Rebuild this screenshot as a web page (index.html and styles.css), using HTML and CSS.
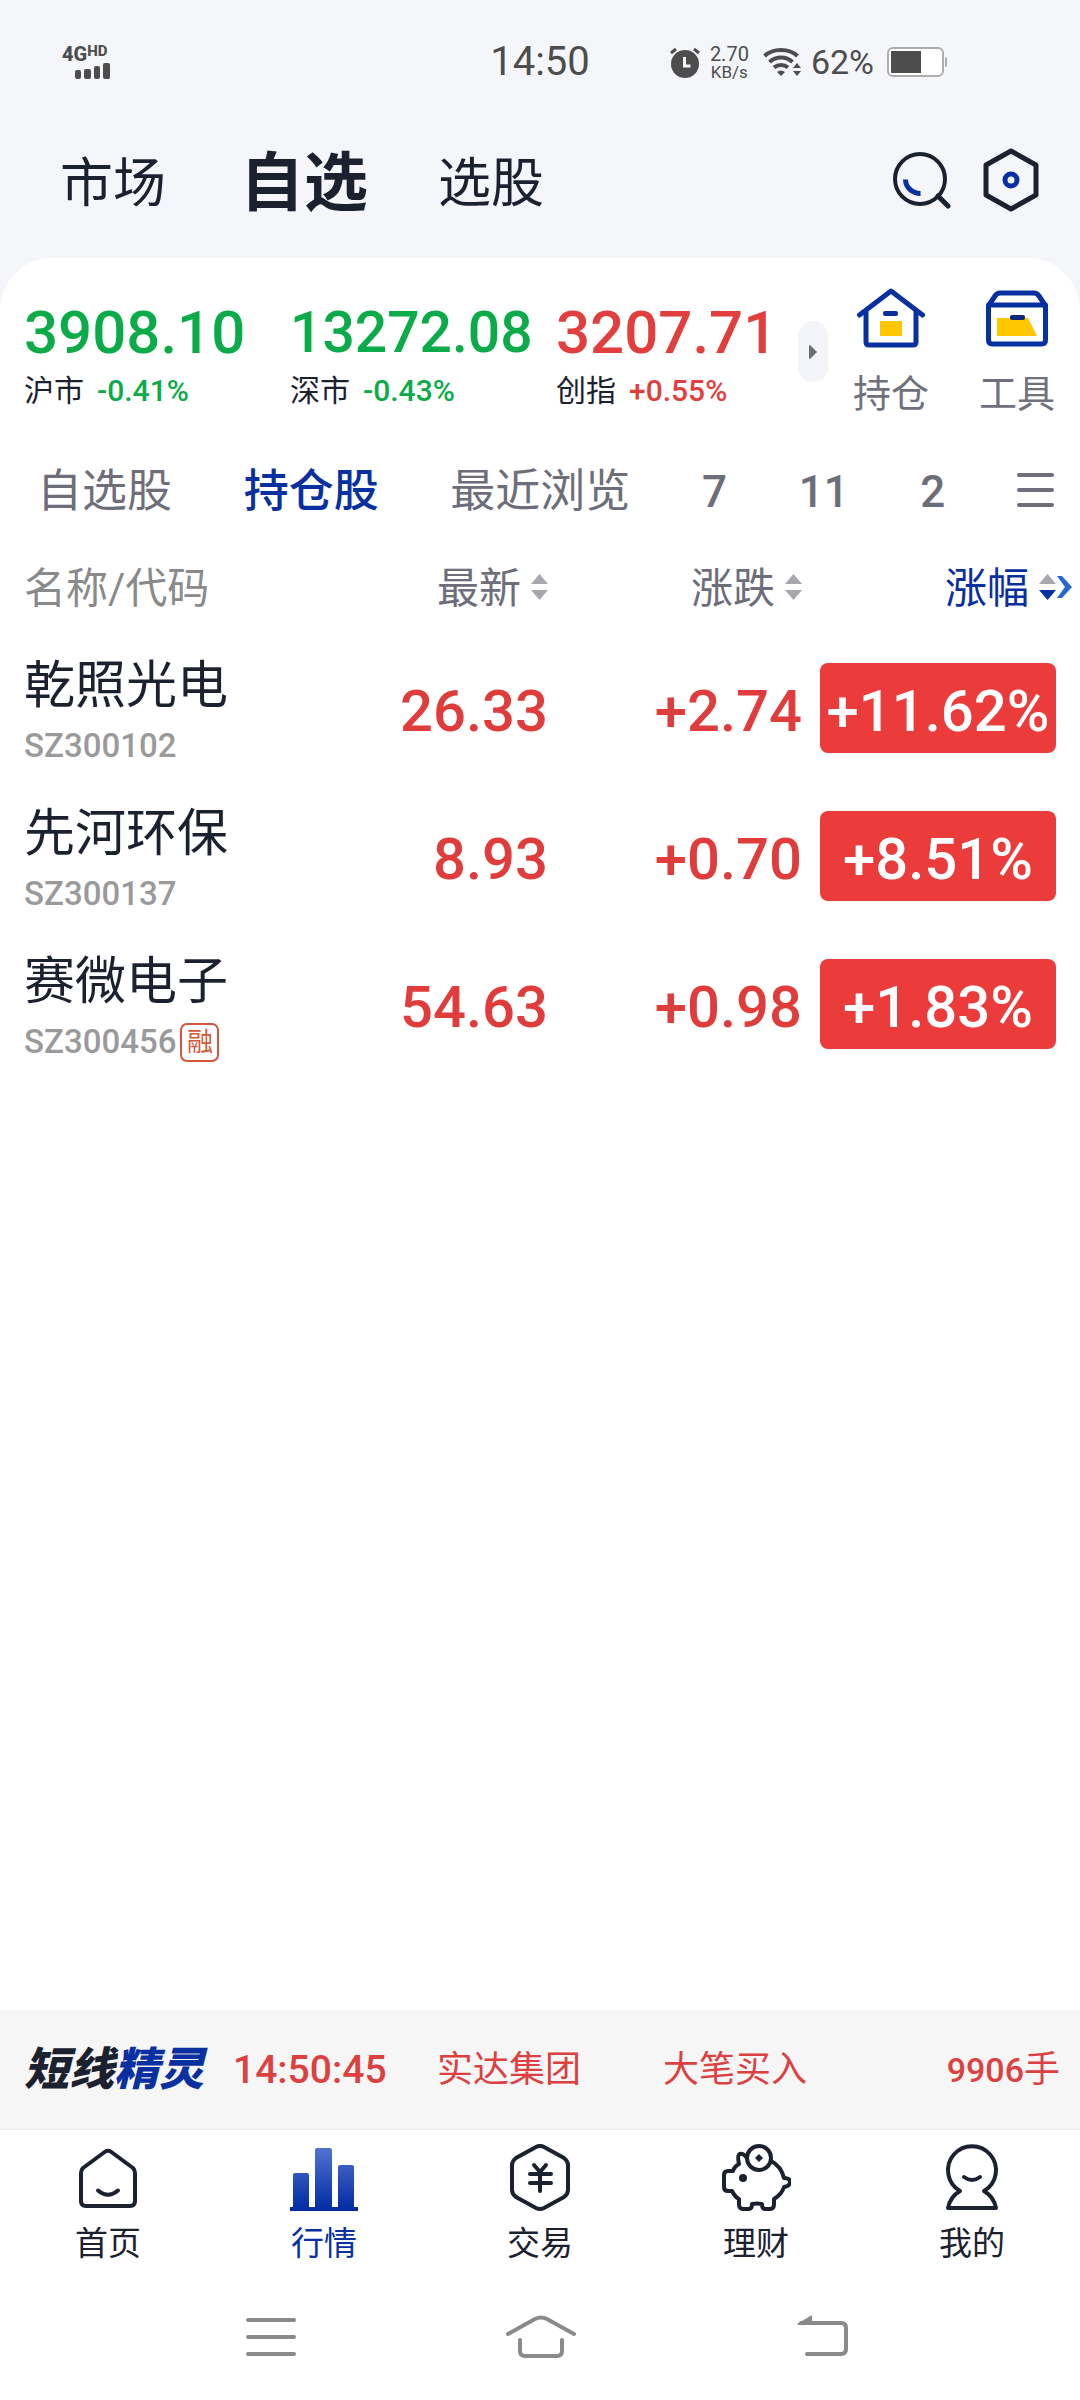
FILE: index.html
```html
<!DOCTYPE html>
<html lang="zh-CN">
<head>
<meta charset="utf-8">
<meta name="viewport" content="width=device-width, initial-scale=1">
<title>自选</title>
<link rel="stylesheet" href="styles.css">
</head>
<body>
<div class="app">
  <div class="status">
    <div class="status-left">
      <span class="net">4G<span class="hd">HD</span></span>
      <svg class="signal" width="35" height="16" viewBox="0 0 35 16"><g fill="#4d4d4d"><rect x="0" y="7" width="6" height="9" rx="2"/><rect x="9" y="6" width="7" height="10" rx="2"/><rect x="19" y="3" width="6" height="13" rx="2"/><rect x="28" y="0" width="7" height="16" rx="2"/></g></svg>
    </div>
    <div class="status-time">14:50</div>
    <div class="status-right">
      <svg width="30" height="31" viewBox="0 0 30 31"><circle cx="15" cy="17" r="14" fill="#4d4d4d"/><path d="M1 6l5-4M29 6l-5-4" stroke="#4d4d4d" stroke-width="3" fill="none"/><path d="M14.500 10v9h6" stroke="#f4f6fa" stroke-width="3" fill="none"/></svg>
      <span class="speed"><span>2.70</span><span class="unit">KB/s</span></span>
      <svg class="wifi" width="38" height="30" viewBox="0 0 38 30"><g fill="none" stroke="#4d4d4d" stroke-width="4"><path d="M1.500 9C10 1 26 1 34.500 9"/><path d="M6.500 15C13 9 23 9 29.500 15"/><path d="M11 20.500C15 17 21 17 25 20.500"/></g><path d="M14 25q4-3 8 0l-4 4z" fill="#4d4d4d"/><path d="M30 21l4-5 4 5zM30 24l4 5 4-5z" fill="#4d4d4d"/></svg>
      <span class="pct">62%</span>
      <svg width="60" height="31" viewBox="0 0 60 31"><rect x="1" y="1" width="55" height="28" rx="5" fill="#fff" stroke="#adadad" stroke-width="2"/><rect x="4" y="4" width="30" height="22" fill="#4d4d4d"/><path d="M58 10q2 0 2 2v6q0 2-2 2z" fill="#adadad"/></svg>
    </div>
  </div>

  <header class="top">
    <nav class="top-tabs">
      <a href="#">市场</a>
      <a href="#" class="on">自选</a>
      <a href="#">选股</a>
    </nav>
    <div class="top-actions">
      <button class="icon-btn" aria-label="搜索"><svg width="58" height="64" viewBox="0 0 58 64"><circle cx="27" cy="31" r="25" fill="none" stroke="#1c2130" stroke-width="4"/><path d="M45 48l10 10" stroke="#1c2130" stroke-width="5" stroke-linecap="round"/><path d="M12.500 31.500a15 14 0 0 0 15 14" fill="none" stroke="#0930a0" stroke-width="5"/></svg></button>
      <button class="icon-btn" aria-label="设置"><svg width="56" height="64" viewBox="0 0 56 64"><path d="M28 3L53 17V47L28 61L3 47V17Z" fill="none" stroke="#1c2130" stroke-width="5" stroke-linejoin="round"/><circle cx="28" cy="32" r="6" fill="none" stroke="#0930a0" stroke-width="5"/></svg></button>
    </div>
  </header>

  <main class="card">
    <section class="indices">
      <div class="index down"><div class="value">3908.10</div><div class="sub"><span class="mkt">沪市</span><span>-0.41%</span></div></div>
      <div class="index down"><div class="value v-sm">13272.08</div><div class="sub"><span class="mkt">深市</span><span>-0.43%</span></div></div>
      <div class="index up"><div class="value">3207.71</div><div class="sub"><span class="mkt">创指</span><span>+0.55%</span></div></div>
      <button class="more" aria-label="展开"><svg width="8" height="14" viewBox="0 0 8 14"><path d="M0 1Q0 0 1 0L8 7L1 14Q0 14 0 13Z" fill="#6d6e7a"/></svg></button>
      <a href="#" class="tool">
        <svg width="68" height="60" viewBox="0 0 68 60"><g fill="none" stroke="#0930a0" stroke-linecap="round" stroke-linejoin="round"><path d="M2.500 27L34 3L65.500 27" stroke-width="5"/><path d="M9 24V54q0 3 3 3H56q3 0 3-3V24" stroke-width="5"/></g><rect x="23" y="33" width="22" height="15" fill="#ffc700"/><rect x="26" y="23" width="15" height="5" rx="2" fill="#0930a0"/></svg>
        <span>持仓</span>
      </a>
      <a href="#" class="tool">
        <svg width="64" height="60" viewBox="0 0 64 60"><path d="M12 30H43L52 48H12Z" fill="#ffc700"/><g fill="none" stroke="#0930a0" stroke-width="5" stroke-linejoin="round"><path d="M4 17L10 8Q12 5 15 5H49Q52 5 54 8L60 17"/><path d="M3.500 17H60.500V52Q60.500 56 56.500 56H7.500Q3.500 56 3.500 52Z"/></g><rect x="25" y="27" width="15" height="5" rx="2" fill="#0b2a7c"/></svg>
        <span>工具</span>
      </a>
    </section>

    <nav class="groups">
      <a href="#">自选股</a>
      <a href="#" class="on">持仓股</a>
      <a href="#">最近浏览</a>
      <a href="#" class="num">7</a>
      <a href="#" class="num">11</a>
      <a href="#" class="num">2</a>
      <button class="icon-btn" aria-label="分组"><svg width="37" height="41" viewBox="0 0 37 41"><path d="M2 3H35M2 18H35M2 33H35" stroke="#6d6e7a" stroke-width="4" stroke-linecap="round"/></svg></button>
    </nav>

    <table class="stocks">
      <colgroup><col><col class="c-price"><col class="c-chg"><col class="c-pct"></colgroup>
      <thead>
        <tr>
          <th class="name">名称/代码</th>
          <th><button class="sort">最新<svg width="17" height="30" viewBox="0 0 17 30"><path d="M0 10L8.500 0L17 10ZM0 16L8.500 26L17 16Z" fill="#a7a8ad"/></svg></button></th>
          <th><button class="sort">涨跌<svg width="17" height="30" viewBox="0 0 17 30"><path d="M0 10L8.500 0L17 10ZM0 16L8.500 26L17 16Z" fill="#a7a8ad"/></svg></button></th>
          <th><button class="sort on">涨幅<svg width="33" height="30" viewBox="0 0 33 30"><path d="M0 10L8.500 0L17 10Z" fill="#a7a8ad"/><path d="M0 16L8.500 26L17 16Z" fill="#0930a0"/><path d="M18 2H23L33 13L23 24H18L26 13Z" fill="#2468d0"/></svg></button></th>
        </tr>
      </thead>
      <tbody>
        <tr><td class="name"><div class="title">乾照光电</div><div class="code">SZ300102</div></td><td>26.33</td><td>+2.74</td><td class="pct-cell"><span class="pill">+11.62%</span></td></tr>
        <tr><td class="name"><div class="title">先河环保</div><div class="code">SZ300137</div></td><td>8.93</td><td>+0.70</td><td class="pct-cell"><span class="pill">+8.51%</span></td></tr>
        <tr><td class="name"><div class="title">赛微电子</div><div class="code">SZ300456<span class="tag">融</span></div></td><td>54.63</td><td>+0.98</td><td class="pct-cell"><span class="pill">+1.83%</span></td></tr>
      </tbody>
    </table>
  </main>

  <section class="ticker">
    <strong class="brand">短线<span>精灵</span></strong>
    <span class="t-time">14:50:45</span>
    <span class="t-name">实达集团</span>
    <span class="t-act">大笔买入</span>
    <span class="t-vol"><b>9906</b>手</span>
  </section>

  <nav class="tabbar">
    <a href="#"><svg width="70" height="70" viewBox="0 0 70 70"><path d="M31 8.500Q35 5 39 8.500L60 24Q62 26 62 29V57Q62 62 57 62H13Q8 62 8 57V29Q8 26 10 24Z" fill="none" stroke="#1c2130" stroke-width="4" stroke-linejoin="round"/><path d="M25 46.500Q35 55 45 46.500" fill="none" stroke="#1c2130" stroke-width="4" stroke-linecap="round"/></svg><span>首页</span></a>
    <a href="#" class="on"><svg width="70" height="70" viewBox="0 0 70 70"><defs><linearGradient id="bars" gradientUnits="userSpaceOnUse" x1="0" y1="2" x2="0" y2="66"><stop offset="0" stop-color="#5575d2"/><stop offset="1" stop-color="#002ba3"/></linearGradient></defs><path d="M1 67V63H4V31Q4 29 6 29H18Q20 29 20 31V63H26V6Q26 4 28 4H41Q43 4 43 6V63H49V23Q49 21 51 21H63Q65 21 65 23V63H69V67Z" fill="url(#bars)"/></svg><span>行情</span></a>
    <a href="#"><svg width="70" height="70" viewBox="0 0 70 70"><path d="M31 3Q35 1 39 3L59 14Q63 17 63 21V46Q63 50 59 53L39 64Q35 66 31 64L11 53Q7 50 7 46V21Q7 17 11 14Z" fill="none" stroke="#1c2130" stroke-width="4"/><path d="M29 21L35 28L41 21M25 30H46M25 39H46M35 28V47" fill="none" stroke="#1c2130" stroke-width="4" stroke-linecap="round"/></svg><span>交易</span></a>
    <a href="#"><svg width="70" height="70" viewBox="0 0 70 70"><g fill="none" stroke="#1c2130" stroke-width="4" stroke-linejoin="round"><circle cx="38" cy="14" r="12"/><path d="M26 14Q22 9 19 10Q16 11 18 20Q13 23 12 27H7Q3 27 3 31V43Q3 47 7 47H11Q14 53 18 55V60Q18 65 22 65H28Q31 65 31 60Q36 59 41 60Q41 65 44 65H49Q53 65 53 60V55Q61 50 63 43Q69 42 69 38Q69 34 63 34Q60 22 50 17"/></g><circle cx="22" cy="34" r="4" fill="#1c2130"/><path d="M38 10l4 4l-4 4l-4-4Z" fill="#1c2130"/></svg><span>理财</span></a>
    <a href="#"><svg width="70" height="70" viewBox="0 0 70 70"><path d="M23 47A24 24 0 1 1 47 47Q57 53 59 64H11Q13 53 23 47Z" fill="none" stroke="#1c2130" stroke-width="4" stroke-linejoin="round"/><path d="M27 33Q35 39 43 33" fill="none" stroke="#1c2130" stroke-width="4" stroke-linecap="round"/></svg><span>我的</span></a>
  </nav>

  <div class="sysnav">
    <button class="icon-btn" aria-label="最近任务"><svg width="50" height="46" viewBox="0 0 50 46"><path d="M2 5H48M2 22H48M2 39H48" stroke="#8a8a8a" stroke-width="4" stroke-linecap="round"/></svg></button>
    <button class="icon-btn" aria-label="主屏幕"><svg width="82" height="46" viewBox="0 0 82 46"><g fill="none" stroke="#8a8a8a" stroke-width="4" stroke-linecap="round"><path d="M2 19L29 4Q35 1 41 4L68 19"/><path d="M14 25V36Q14 41 19 41H51Q56 41 56 36V25"/></g></svg></button>
    <button class="icon-btn" aria-label="返回"><svg width="52" height="46" viewBox="0 0 52 46"><path d="M4 8H44Q49 8 49 13V34Q49 39 44 39H10" fill="none" stroke="#8a8a8a" stroke-width="4" stroke-linecap="round"/><path d="M0 9L15 0V10H1Z" fill="#8a8a8a"/></svg></button>
  </div>
</div>
</body>
</html>
```
FILE: styles.css
```css
* { box-sizing: border-box; }
body {
  margin: 0;
  background: #f4f6fa;
  color: #1c2130;
  font-family: Roboto, "Noto Sans CJK SC", sans-serif;
}
a { color: inherit; text-decoration: none; }
button { border: 0; padding: 0; background: none; color: inherit; font: inherit; }
svg { display: block; flex: none; }
.app { display: flex; flex-direction: column; min-height: 100vh; }

/* status bar */
.status {
  display: grid;
  grid-template-columns: 1fr auto 1fr;
  align-items: center;
  height: 124px;
  padding: 0 62px;
  color: #4d4d4d;
}
.status-left { width: 48px; }
.net { display: flex; align-items: flex-start; font-size: 20px; line-height: 17px; font-weight: 800; }
.hd { font-size: 15px; line-height: 11px; }
.signal { margin-left: 13px; }
.status-time { font-size: 40px; line-height: 48px; }
.status-right { display: flex; align-items: center; justify-content: flex-end; gap: 10px; padding-right: 71px; }
.speed { display: flex; flex-direction: column; align-items: center; font-size: 20px; line-height: 20px; }
.unit { font-size: 17px; line-height: 17px; }
.wifi { margin-left: 4px; }
.pct { margin-right: 3px; font-size: 34px; line-height: 40px; }

/* header */
.top { display: flex; align-items: center; height: 134px; padding: 0 41px 14px 60px; }
.top-tabs { display: flex; align-items: center; flex: 1; gap: 70px; font-size: 53px; line-height: 72px; }
.top-tabs .on { font-size: 64px; font-weight: 700; padding-left: 4px; }
.top-actions { display: flex; gap: 32px; padding-bottom: 8px; }
.icon-btn { display: flex; align-items: center; justify-content: center; }

/* card */
.card { flex: 1; background: #fff; border-radius: 52px 52px 0 0; padding-top: 26px; }
.indices { display: flex; padding-left: 24px; }
.index { flex: none; width: 266px; padding-top: 15px; }
.index:nth-child(3) { width: 242px; }
.value { font-size: 60px; line-height: 68px; font-weight: 500; }
.v-sm { font-size: 57px; }
.sub { display: flex; align-items: center; gap: 13px; margin-top: 2px; font-size: 30px; line-height: 44px; font-weight: 500; }
.mkt { font-weight: 400; color: #1c2130; }
.down { color: #0aab48; }
.up { color: #e23e3e; }
.more {
  display: flex; align-items: center; justify-content: center;
  width: 30px; height: 61px; margin-top: 37px;
  border-radius: 15px; background: #f4f5fa;
}
.tool { display: flex; flex-direction: column; align-items: center; gap: 18px; flex: 1; padding-top: 4px; color: #70717c; font-size: 38px; line-height: 56px; }

/* group tabs */
.groups {
  display: flex; align-items: center; justify-content: space-between;
  padding: 38px 26px 0 37px;
  color: #6d6e7a; font-size: 45px; line-height: 64px;
}
.groups .on { color: #0930a0; font-weight: 500; }
.num { font-size: 44px; font-weight: 500; }

/* stock table */
.stocks { width: 100%; margin-top: 20px; border-collapse: collapse; table-layout: fixed; }
.c-price { width: 254px; }
.c-chg { width: 254px; }
.c-pct { width: 278px; }
.stocks th { height: 90px; padding: 0; font-size: 42px; line-height: 60px; font-weight: 400; text-align: right; color: #6d6e7a; }
.stocks th.name { text-align: left; padding-left: 24px; color: #8a8a8a; white-space: nowrap; }
.sort { display: inline-flex; align-items: center; gap: 10px; vertical-align: top; }
.sort.on { color: #0930a0; padding-right: 8px; }
.stocks td { height: 148px; padding: 6px 0 0; text-align: right; font-size: 58px; line-height: 84px; font-weight: 500; color: #e03c3c; }
.stocks td.name { text-align: left; padding: 0 0 0 24px; font-weight: 400; white-space: nowrap; }
.title { padding-top: 6px; color: #1c2130; font-size: 51px; line-height: 70px; }
.code { display: flex; align-items: center; gap: 4px; height: 50px; color: #9a9a9a; font-size: 33px; line-height: 40px; font-weight: 500; }
.tag {
  display: flex; align-items: center; justify-content: center;
  width: 39px; height: 39px; border: 2px solid #d4573a; border-radius: 7px;
  color: #d4573a; font-size: 26px; font-weight: 400;
}
.stocks td.pct-cell { padding: 0 24px 0 18px; }
.pill { display: block; padding-top: 6px; border-radius: 8px; background: #eb3b3b; color: #fff; text-align: center; }

/* ticker */
.ticker {
  display: flex; align-items: center;
  height: 120px; padding: 0 20px 0 24px;
  background: #f6f6f6; border-bottom: 1px solid #ebebeb;
  color: #dc4040; font-size: 36px; line-height: 52px;
}
.brand { width: 209px; font-size: 45px; font-weight: 900; font-style: italic; color: #1c2130; }
.brand span { color: #0930a0; }
.t-time { width: 204px; font-size: 39px; font-weight: 500; }
.t-name { width: 226px; }
.t-vol { margin-left: auto; }
.t-vol b { font-weight: 500; font-size: 34px; }

/* tab bar */
.tabbar { display: grid; grid-template-columns: repeat(5, 1fr); background: #fff; }
.tabbar a { display: flex; flex-direction: column; align-items: center; gap: 6px; padding-top: 14px; font-size: 33px; line-height: 48px; }
.tabbar .on { color: #0930a0; }
.sysnav { display: flex; justify-content: space-between; height: 132px; padding: 47px 231px 0 246px; background: #fff; }
.sysnav .icon-btn { height: 46px; }
```
